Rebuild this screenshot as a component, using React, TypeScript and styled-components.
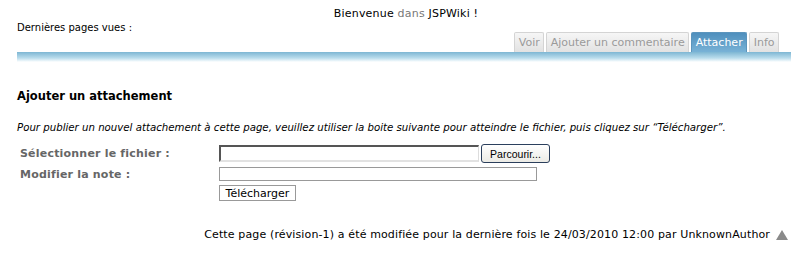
import * as React from 'react';
import styled, { createGlobalStyle } from 'styled-components';

const GlobalStyle = createGlobalStyle`
  body {
    margin: 0;
    background: #ffffff;
    font-family: "DejaVu Sans", Verdana, sans-serif;
    color: #000;
  }
`;

const Page = styled.div`
  width: 804px;
  padding: 7px 13px 0 17px;
  box-sizing: border-box;
`;

const Welcome = styled.div`
  text-align: center;
  font-size: 11px;
  letter-spacing: 0.2px;
  line-height: 13px;
  padding-left: 4px;
`;

const Muted = styled.span`
  color: #777;
`;

const HeaderRow = styled.div`
  display: flex;
  justify-content: space-between;
  align-items: flex-end;
  margin-top: 2px;
`;

const Breadcrumb = styled.div`
  font-size: 10px;
  align-self: flex-start;
  line-height: 12px;
`;

const Tabs = styled.div`
  display: flex;
  gap: 2px;
  margin-right: 12px;
  margin-top: 10px;
`;

const Tab = styled.div<{ $active?: boolean }>`
  height: 19px;
  padding: 0 3.5px;
  display: flex;
  align-items: center;
  font-size: 11px;
  border: 1px solid ${(p) => (p.$active ? '#5c95bd' : '#d4d4d4')};
  border-bottom: none;
  border-radius: 2px 2px 0 0;
  color: ${(p) => (p.$active ? '#ffffff' : '#9a9a9a')};
  background: ${(p) =>
    p.$active
      ? 'linear-gradient(#4f8fbd, #78b2d6)'
      : 'linear-gradient(#f6f6f6, #e2e2e2)'};
`;

const Bar = styled.div`
  height: 10px;
  background: linear-gradient(#7db6d3, #b9dcec 60%, #ffffff);
`;

const Content = styled.div`
  padding-top: 26px;
`;

const Heading = styled.h2`
  margin: 0;
  font-size: 11.5px;
  font-weight: bold;
  line-height: 16px;
`;

const Intro = styled.p`
  margin: 18px 0 0;
  font-size: 10.2px;
  font-style: italic;
  line-height: 12px;
`;

const Form = styled.div`
  display: grid;
  grid-template-columns: 199px auto;
  row-gap: 4px;
  margin-top: 10px;
  padding-left: 3px;
  align-items: center;
`;

const Label = styled.label`
  font-size: 11px;
  font-weight: bold;
  letter-spacing: 0.2px;
  color: #666;
`;

const Field = styled.div`
  display: flex;
  gap: 2px;
  align-items: center;
`;

const FileBox = styled.div`
  width: 260px;
  height: 17px;
  box-sizing: border-box;
  border: 2px solid #555;
  border-right: 1px solid #ddd;
  border-bottom: 2px solid #e2e2e2;
  background: #fff;
`;

const BrowseButton = styled.button`
  height: 19px;
  width: 69px;
  padding: 0;
  border: 1px solid #2b3f5c;
  border-radius: 3px;
  background: linear-gradient(#ffffff, #ecebe5);
  font-family: "Liberation Sans", Arial, sans-serif;
  font-size: 10.5px;
  color: #000;
`;

const NoteInput = styled.input`
  width: 318px;
  height: 14px;
  box-sizing: border-box;
  border: 1px solid #999;
  padding: 0;
  margin: 0;
`;

const UploadButton = styled.button`
  height: 16px;
  width: 77px;
  padding: 0;
  border: 1px solid #999;
  background: #fff;
  font-family: "DejaVu Sans", Verdana, sans-serif;
  font-size: 11px;
  color: #000;
`;

const Footer = styled.div`
  display: flex;
  justify-content: flex-end;
  align-items: center;
  gap: 6px;
  margin-top: 27px;
  margin-right: 3px;
  font-size: 11px;
  letter-spacing: 0.13px;
`;

export default function App() {
  return (
    <>
      <GlobalStyle />
      <Page>
        <Welcome>
          Bienvenue <Muted>dans</Muted> JSPWiki !
        </Welcome>
        <HeaderRow>
          <Breadcrumb>Dernières pages vues :</Breadcrumb>
          <Tabs>
            <Tab>Voir</Tab>
            <Tab>Ajouter un commentaire</Tab>
            <Tab $active>Attacher</Tab>
            <Tab>Info</Tab>
          </Tabs>
        </HeaderRow>
        <Bar />
        <Content>
          <Heading>Ajouter un attachement</Heading>
          <Intro>
            Pour publier un nouvel attachement à cette page, veuillez utiliser la boite suivante pour atteindre le fichier, puis cliquez sur “Télécharger”.
          </Intro>
          <Form>
            <Label>Sélectionner le fichier :</Label>
            <Field>
              <FileBox />
              <BrowseButton>Parcourir...</BrowseButton>
            </Field>
            <Label>Modifier la note :</Label>
            <Field>
              <NoteInput />
            </Field>
            <span />
            <Field>
              <UploadButton>Télécharger</UploadButton>
            </Field>
          </Form>
        </Content>
        <Footer>
          <span>
            Cette page (révision-1) a été modifiée pour la dernière fois le 24/03/2010 12:00 par UnknownAuthor
          </span>
          <svg width="12" height="10" viewBox="0 0 12 10">
            <polygon points="6,0 12,10 0,10" fill="#8a8a8a" />
          </svg>
        </Footer>
      </Page>
    </>
  );
}
